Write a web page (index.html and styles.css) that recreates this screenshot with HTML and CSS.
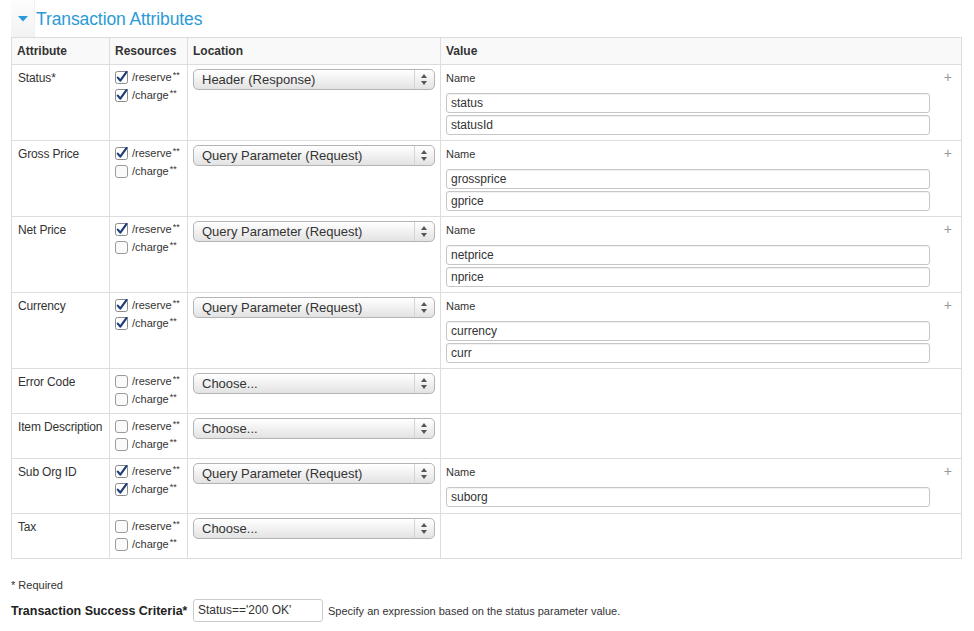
FILE: index.html
```html
<!DOCTYPE html>
<html>
<head>
<meta charset="utf-8">
<link rel="stylesheet" href="styles.css">
</head>
<body>
<div class="page">
  <div class="section-head">
    <div class="toggle"><svg width="10" height="6" viewBox="0 0 10 6"><path d="M0 0 H10 L5 5.5 Z" fill="#2a9ad8"/></svg></div>
    <h2 class="title">Transaction Attributes</h2>
  </div>
  <table class="attrs">
    <colgroup><col class="c1"><col class="c2"><col class="c3"><col class="c4"></colgroup>
    <thead>
      <tr><th>Attribute</th><th>Resources</th><th>Location</th><th>Value</th></tr>
    </thead>
    <tbody>
      <tr>
        <td>Status<span class="req">*</span></td>
        <td>
          <div class="res"><svg class="cb" width="13" height="13" viewBox="0 0 13 13"><rect x="0.5" y="0.5" width="12" height="12" rx="2" fill="#fff" stroke="#8b8b8b"/><path d="M2.8 6.6 L5.3 9.6 L11.6 0.8" fill="none" stroke="#1d3f78" stroke-width="2.2" stroke-linecap="round" stroke-linejoin="round"/></svg><span>/reserve<sup>**</sup></span></div>
          <div class="res"><svg class="cb" width="13" height="13" viewBox="0 0 13 13"><rect x="0.5" y="0.5" width="12" height="12" rx="2" fill="#fff" stroke="#8b8b8b"/><path d="M2.8 6.6 L5.3 9.6 L11.6 0.8" fill="none" stroke="#1d3f78" stroke-width="2.2" stroke-linecap="round" stroke-linejoin="round"/></svg><span>/charge<sup>**</sup></span></div>
        </td>
        <td><div class="sel"><span>Header (Response)</span><svg class="arr" width="6" height="11" viewBox="0 0 6 11"><path d="M3 0 L6 4 H0 Z M3 11 L6 7 H0 Z" fill="#555"/></svg></div></td>
        <td>
          <div class="val">
            <div class="names">
              <div class="lbl">Name</div>
              <div class="inp">status</div>
              <div class="inp">statusId</div>
            </div>
            <div class="plus">+</div>
          </div>
        </td>
      </tr>
      <tr>
        <td>Gross Price</td>
        <td>
          <div class="res"><svg class="cb" width="13" height="13" viewBox="0 0 13 13"><rect x="0.5" y="0.5" width="12" height="12" rx="2" fill="#fff" stroke="#8b8b8b"/><path d="M2.8 6.6 L5.3 9.6 L11.6 0.8" fill="none" stroke="#1d3f78" stroke-width="2.2" stroke-linecap="round" stroke-linejoin="round"/></svg><span>/reserve<sup>**</sup></span></div>
          <div class="res"><svg class="cb" width="13" height="13" viewBox="0 0 13 13"><rect x="0.5" y="0.5" width="12" height="12" rx="2.5" fill="#fafafa" stroke="#9a9a9a"/></svg><span>/charge<sup>**</sup></span></div>
        </td>
        <td><div class="sel"><span>Query Parameter (Request)</span><svg class="arr" width="6" height="11" viewBox="0 0 6 11"><path d="M3 0 L6 4 H0 Z M3 11 L6 7 H0 Z" fill="#555"/></svg></div></td>
        <td>
          <div class="val">
            <div class="names">
              <div class="lbl">Name</div>
              <div class="inp">grossprice</div>
              <div class="inp">gprice</div>
            </div>
            <div class="plus">+</div>
          </div>
        </td>
      </tr>
      <tr>
        <td>Net Price</td>
        <td>
          <div class="res"><svg class="cb" width="13" height="13" viewBox="0 0 13 13"><rect x="0.5" y="0.5" width="12" height="12" rx="2" fill="#fff" stroke="#8b8b8b"/><path d="M2.8 6.6 L5.3 9.6 L11.6 0.8" fill="none" stroke="#1d3f78" stroke-width="2.2" stroke-linecap="round" stroke-linejoin="round"/></svg><span>/reserve<sup>**</sup></span></div>
          <div class="res"><svg class="cb" width="13" height="13" viewBox="0 0 13 13"><rect x="0.5" y="0.5" width="12" height="12" rx="2.5" fill="#fafafa" stroke="#9a9a9a"/></svg><span>/charge<sup>**</sup></span></div>
        </td>
        <td><div class="sel"><span>Query Parameter (Request)</span><svg class="arr" width="6" height="11" viewBox="0 0 6 11"><path d="M3 0 L6 4 H0 Z M3 11 L6 7 H0 Z" fill="#555"/></svg></div></td>
        <td>
          <div class="val">
            <div class="names">
              <div class="lbl">Name</div>
              <div class="inp">netprice</div>
              <div class="inp">nprice</div>
            </div>
            <div class="plus">+</div>
          </div>
        </td>
      </tr>
      <tr>
        <td>Currency</td>
        <td>
          <div class="res"><svg class="cb" width="13" height="13" viewBox="0 0 13 13"><rect x="0.5" y="0.5" width="12" height="12" rx="2" fill="#fff" stroke="#8b8b8b"/><path d="M2.8 6.6 L5.3 9.6 L11.6 0.8" fill="none" stroke="#1d3f78" stroke-width="2.2" stroke-linecap="round" stroke-linejoin="round"/></svg><span>/reserve<sup>**</sup></span></div>
          <div class="res"><svg class="cb" width="13" height="13" viewBox="0 0 13 13"><rect x="0.5" y="0.5" width="12" height="12" rx="2" fill="#fff" stroke="#8b8b8b"/><path d="M2.8 6.6 L5.3 9.6 L11.6 0.8" fill="none" stroke="#1d3f78" stroke-width="2.2" stroke-linecap="round" stroke-linejoin="round"/></svg><span>/charge<sup>**</sup></span></div>
        </td>
        <td><div class="sel"><span>Query Parameter (Request)</span><svg class="arr" width="6" height="11" viewBox="0 0 6 11"><path d="M3 0 L6 4 H0 Z M3 11 L6 7 H0 Z" fill="#555"/></svg></div></td>
        <td>
          <div class="val">
            <div class="names">
              <div class="lbl">Name</div>
              <div class="inp">currency</div>
              <div class="inp">curr</div>
            </div>
            <div class="plus">+</div>
          </div>
        </td>
      </tr>
      <tr>
        <td>Error Code</td>
        <td>
          <div class="res"><svg class="cb" width="13" height="13" viewBox="0 0 13 13"><rect x="0.5" y="0.5" width="12" height="12" rx="2.5" fill="#fafafa" stroke="#9a9a9a"/></svg><span>/reserve<sup>**</sup></span></div>
          <div class="res"><svg class="cb" width="13" height="13" viewBox="0 0 13 13"><rect x="0.5" y="0.5" width="12" height="12" rx="2.5" fill="#fafafa" stroke="#9a9a9a"/></svg><span>/charge<sup>**</sup></span></div>
        </td>
        <td><div class="sel"><span>Choose...</span><svg class="arr" width="6" height="11" viewBox="0 0 6 11"><path d="M3 0 L6 4 H0 Z M3 11 L6 7 H0 Z" fill="#555"/></svg></div></td>
        <td></td>
      </tr>
      <tr>
        <td>Item Description</td>
        <td>
          <div class="res"><svg class="cb" width="13" height="13" viewBox="0 0 13 13"><rect x="0.5" y="0.5" width="12" height="12" rx="2.5" fill="#fafafa" stroke="#9a9a9a"/></svg><span>/reserve<sup>**</sup></span></div>
          <div class="res"><svg class="cb" width="13" height="13" viewBox="0 0 13 13"><rect x="0.5" y="0.5" width="12" height="12" rx="2.5" fill="#fafafa" stroke="#9a9a9a"/></svg><span>/charge<sup>**</sup></span></div>
        </td>
        <td><div class="sel"><span>Choose...</span><svg class="arr" width="6" height="11" viewBox="0 0 6 11"><path d="M3 0 L6 4 H0 Z M3 11 L6 7 H0 Z" fill="#555"/></svg></div></td>
        <td></td>
      </tr>
      <tr>
        <td>Sub Org ID</td>
        <td>
          <div class="res"><svg class="cb" width="13" height="13" viewBox="0 0 13 13"><rect x="0.5" y="0.5" width="12" height="12" rx="2" fill="#fff" stroke="#8b8b8b"/><path d="M2.8 6.6 L5.3 9.6 L11.6 0.8" fill="none" stroke="#1d3f78" stroke-width="2.2" stroke-linecap="round" stroke-linejoin="round"/></svg><span>/reserve<sup>**</sup></span></div>
          <div class="res"><svg class="cb" width="13" height="13" viewBox="0 0 13 13"><rect x="0.5" y="0.5" width="12" height="12" rx="2" fill="#fff" stroke="#8b8b8b"/><path d="M2.8 6.6 L5.3 9.6 L11.6 0.8" fill="none" stroke="#1d3f78" stroke-width="2.2" stroke-linecap="round" stroke-linejoin="round"/></svg><span>/charge<sup>**</sup></span></div>
        </td>
        <td><div class="sel"><span>Query Parameter (Request)</span><svg class="arr" width="6" height="11" viewBox="0 0 6 11"><path d="M3 0 L6 4 H0 Z M3 11 L6 7 H0 Z" fill="#555"/></svg></div></td>
        <td>
          <div class="val">
            <div class="names">
              <div class="lbl">Name</div>
              <div class="inp last">suborg</div>
            </div>
            <div class="plus">+</div>
          </div>
        </td>
      </tr>
      <tr>
        <td>Tax</td>
        <td>
          <div class="res"><svg class="cb" width="13" height="13" viewBox="0 0 13 13"><rect x="0.5" y="0.5" width="12" height="12" rx="2.5" fill="#fafafa" stroke="#9a9a9a"/></svg><span>/reserve<sup>**</sup></span></div>
          <div class="res"><svg class="cb" width="13" height="13" viewBox="0 0 13 13"><rect x="0.5" y="0.5" width="12" height="12" rx="2.5" fill="#fafafa" stroke="#9a9a9a"/></svg><span>/charge<sup>**</sup></span></div>
        </td>
        <td><div class="sel"><span>Choose...</span><svg class="arr" width="6" height="11" viewBox="0 0 6 11"><path d="M3 0 L6 4 H0 Z M3 11 L6 7 H0 Z" fill="#555"/></svg></div></td>
        <td></td>
      </tr>
    </tbody>
  </table>
  <div class="required">* Required</div>
  <div class="criteria">
    <label class="crit-label">Transaction Success Criteria<span class="req">*</span></label>
    <div class="crit-input">Status=='200 OK'</div>
    <span class="help">Specify an expression based on the status parameter value.</span>
  </div>
</div>
</body>
</html>
```
FILE: styles.css
```css
html, body {
  margin: 0;
  padding: 0;
  background: #fff;
}
body {
  font-family: "Liberation Sans", Arial, sans-serif;
  font-size: 12px;
  color: #333;
}
.page {
  padding: 0 13px 0 11px;
}
.section-head {
  display: flex;
  align-items: stretch;
  height: 37px;
}
.toggle {
  width: 24px;
  background: linear-gradient(#fdfdfd, #f2f2f2);
  border-right: 1px solid #f0f0f0;
  display: flex;
  justify-content: center;
  padding-top: 16px;
  box-sizing: border-box;
}
.title {
  margin: 0;
  padding-left: 1px;
  padding-top: 8px;
  font-weight: normal;
  font-size: 17.5px;
  line-height: 22px;
  color: #2b9ad6;
  letter-spacing: -0.1px;
  white-space: nowrap;
}
.attrs {
  width: 951px;
  border-collapse: collapse;
  table-layout: fixed;
}
.c1 { width: 98px; }
.c2 { width: 78px; }
.c3 { width: 253px; }
.attrs th, .attrs td {
  border: 1px solid #dddddd;
  text-align: left;
  vertical-align: top;
}
.attrs th {
  background: #f9f9f9;
  font-weight: bold;
  padding: 5px 5px 4px;
  line-height: 17px;
  color: #333;
}
.attrs td {
  padding: 3px 5px 5px;
  line-height: 18px;
}
.attrs td:first-child {
  padding-top: 4px;
  padding-left: 6px;
  white-space: nowrap;
  letter-spacing: -0.15px;
}
.req {
  font-size: 12px;
}
.res {
  display: flex;
  align-items: center;
  height: 18px;
  font-size: 11px;
  white-space: nowrap;
}
.cb {
  margin-right: 4px;
  flex: none;
}
sup {
  font-size: 9px;
  line-height: 0;
  vertical-align: 3px;
  margin-left: 1px;
}
.sel {
  position: relative;
  height: 21px;
  margin-top: 1px;
  border: 1px solid #b4b4b4;
  border-radius: 5px;
  background: linear-gradient(#ffffff, #f1f1f1 50%, #e3e3e3);
  box-shadow: inset 0 1px 0 #fff;
  font-size: 13px;
  line-height: 19px;
  padding-left: 8px;
  box-sizing: border-box;
  color: #333;
}
.arr {
  position: absolute;
  right: 7px;
  top: 4px;
}
.sel::after {
  content: "";
  position: absolute;
  right: 19px;
  top: 0;
  bottom: 0;
  border-left: 1px solid #d4d4d4;
}
.val {
  display: flex;
}
.names {
  width: 484px;
}
.lbl {
  font-size: 11px;
  line-height: 18px;
  margin-top: 1px;
}
.inp {
  height: 20px;
  box-sizing: border-box;
  border: 1px solid #c6c6c6;
  border-radius: 3px;
  font-size: 12px;
  line-height: 18px;
  padding-left: 4px;
  margin-top: 6px;
  box-shadow: inset 0 1px 1px rgba(0,0,0,0.06);
}
.inp + .inp {
  margin-top: 2px;
}
.inp.last {
  margin-bottom: 1px;
}
.plus {
  margin-left: auto;
  margin-right: 4px;
  font-size: 14px;
  color: #999;
  line-height: 16px;
  margin-top: 1px;
}
.required {
  margin-top: 19px;
  font-size: 11px;
  line-height: 14px;
}
.criteria {
  display: flex;
  align-items: center;
  margin-top: 7px;
}
.crit-label {
  font-weight: bold;
  font-size: 12.5px;
  color: #222;
  width: 182px;
  flex: none;
  white-space: nowrap;
}
.crit-input {
  width: 130px;
  height: 23px;
  flex: none;
  box-sizing: border-box;
  border: 1px solid #cccccc;
  border-radius: 3px;
  padding-left: 4px;
  font-size: 12px;
  line-height: 21px;
}
.help {
  margin-left: 5px;
  font-size: 11px;
  white-space: nowrap;
}
```
